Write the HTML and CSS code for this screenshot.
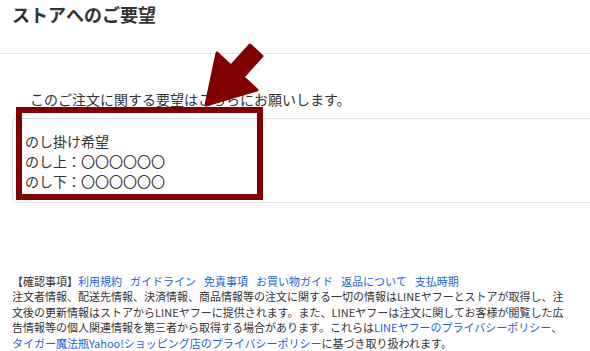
FILE: index.html
```html
<!DOCTYPE html>
<html lang="ja">
  <head>
    <meta charset="UTF-8" />
    <title>ストアへのご要望</title>
    <link rel="stylesheet" href="styles.css">
  </head>
  <body>
    <main>
      <h2 class="title">ストアへのご要望</h2>

      <section class="request">
        <p class="lead">このご注文に関する要望はこちらにお願いします。</p>
        <div class="reqBox">
          <p>のし掛け希望</p>
          <p>のし上：〇〇〇〇〇〇</p>
          <p>のし下：〇〇〇〇〇〇</p>
        </div>
        <!-- annotation -->
        <div class="mark"></div>
        <svg class="arrow" width="80" height="80" viewBox="195 36 80 80">
          <polygon
            points="206,105 217,53 231,66 250,45 262,56 243,77 257,90"
            fill="#800000"
            stroke="#800000"
            stroke-width="3"
            stroke-linejoin="round"
          />
        </svg>
      </section>

      <footer class="notes">
        <p class="links">
          【確認事項】<a href="#">利用規約</a><a href="#">ガイドライン</a><a href="#">免責事項</a><a href="#">お買い物ガイド</a><a href="#">返品について</a><a href="#">支払時期</a>
        </p>
        <p>
          注文者情報、配送先情報、決済情報、商品情報等の注文に関する一切の情報はLINEヤフーとストアが取得し、注<br>文後の更新情報はストアからLINEヤフーに提供されます。また、LINEヤフーは注文に関してお客様が閲覧した広<br>告情報等の個人関連情報を第三者から取得する場合があります。これらは<a class="inline" href="#">LINEヤフーのプライバシーポリシー</a>、<br><a class="inline" href="#">タイガー魔法瓶Yahoo!ショッピング店のプライバシーポリシー</a>に基づき取り扱われます。
        </p>
      </footer>
    </main>
  </body>
</html>
```

FILE: styles.css
```css
* {
  margin: 0;
  padding: 0;
  box-sizing: border-box;
}

body {
  font-family: "Noto Sans CJK JP", "Noto Sans", sans-serif;
  color: #333;
  background: #fff;
  overflow: hidden;
}

.title {
  font-size: 18px;
  font-weight: 700;
  line-height: 24px;
  padding: 2px 12px 0;
  height: 54px;
  border-bottom: 1px solid #e6e6e6;
}

.request {
  position: relative;
  padding-top: 35px;
}

.lead {
  font-size: 14px;
  line-height: 20px;
  padding-left: 30px;
}

.reqBox {
  margin: 9px -12px 0 12px;
  height: 85px;
  padding: 12px 12px 0;
  border: 1px solid #e3e3e3;
  border-radius: 5px;
  font-size: 14px;
  line-height: 20px;
}

.mark {
  position: absolute;
  left: 16px;
  top: 53px;
  width: 247px;
  height: 93px;
  border: 6px solid #800000;
}

.arrow {
  position: absolute;
  left: 195px;
  top: -18px;
}

.notes {
  padding: 70px 12px 0;
  font-size: 11px;
  line-height: 15.6px;
  white-space: nowrap;
}

.notes .links {
  line-height: 16px;
}

.notes a {
  color: #1f5fd6;
  text-decoration: none;
  margin-left: 8px;
}

.notes a:first-child {
  margin-left: 0;
}

.notes a.inline {
  margin-left: 0;
}
```
